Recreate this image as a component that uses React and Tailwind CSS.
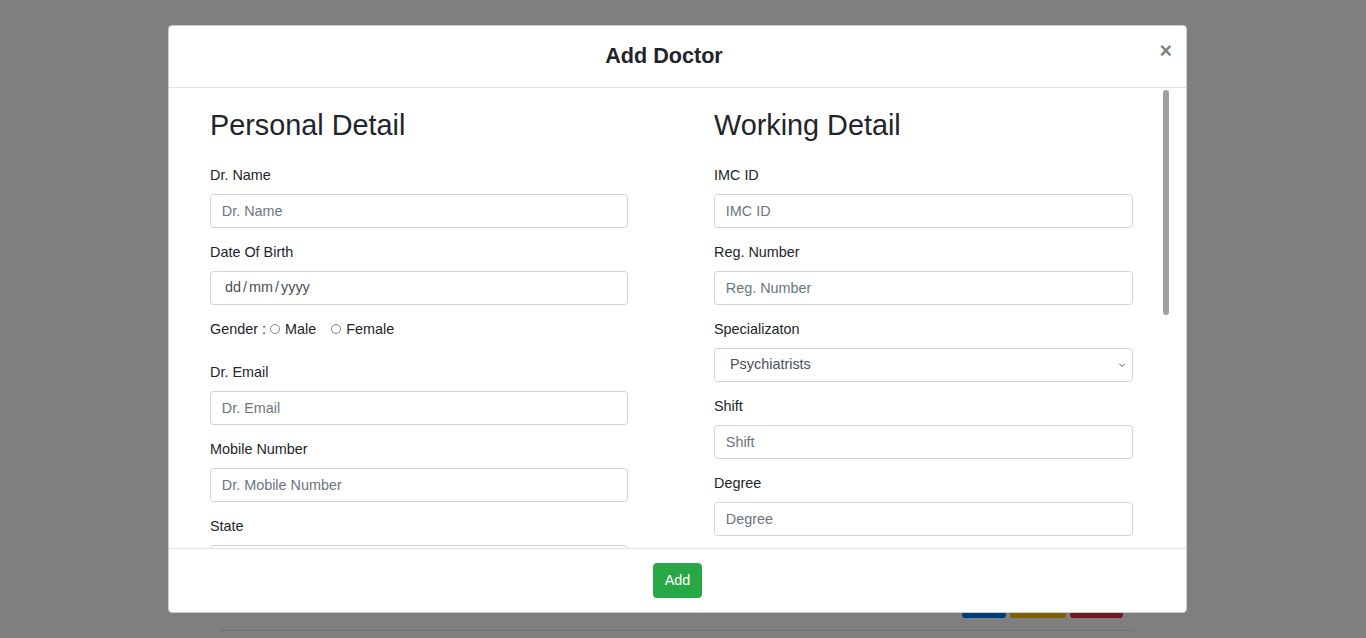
import { useState } from "react";

const Field = ({ label, placeholder }) => (
	<div className="mb-[14px]">
		<label className="block text-[14.4px] leading-[21.6px] mb-[7.2px] text-[#212529]">
			{label}
		</label>
		<input
			className="block w-full h-[34.2px] px-[10.8px] text-[14.4px] text-[#495057] border border-[#ced4da] rounded-[3.6px] bg-white placeholder:text-[#6c757d] outline-none"
			placeholder={placeholder}
		/>
	</div>
);

const Radio = ({ label, checked, onChange }) => (
	<label className="flex items-center gap-[5px] cursor-pointer" onClick={onChange}>
		<span
			className={`w-[10px] h-[10px] rounded-full border ${
				checked ? "border-[#0075ff] bg-[#0075ff]" : "border-[#858585]"
			}`}
		/>
		<span className="leading-[20px]">{label}</span>
	</label>
);

const App = () => {
	const [gender, setGender] = useState("");

	return (
		<div className="relative w-[1366px] h-[638px] overflow-hidden bg-white font-['Liberation_Sans',Arial,sans-serif] text-[#212529]">
			{/* page behind the modal */}
			<div className="pt-[588px] pl-[220px] w-[1133px]">
				<div className="flex justify-end gap-[4px] pr-[10px]">
					<button className="w-[44px] h-[30px] rounded-[3.6px] bg-[#007bff]" />
					<button className="w-[56px] h-[30px] rounded-[3.6px] bg-[#ffc107]" />
					<button className="w-[53px] h-[30px] rounded-[3.6px] bg-[#dc3545]" />
				</div>
				<div className="mt-[12px] border-t border-[#dee2e6]" />
			</div>

			{/* backdrop */}
			<div className="absolute inset-0 bg-black/50" />

			{/* modal */}
			<div className="absolute left-[168px] top-[25px] w-[1019px] bg-white border border-black/20 rounded-[4.3px] flex flex-col">
				<div className="relative h-[62px] pr-[27px] border-b border-[#dee2e6] flex items-center justify-center">
					<h4 className="text-[21.6px] leading-[32.4px] font-bold text-[#212529]">
						Add Doctor
					</h4>
					<button className="absolute right-[14px] top-[14px] text-[21.6px] leading-[21.6px] font-bold text-black/50">
						×
					</button>
				</div>

				<div className="relative h-[460px] overflow-hidden">
					<div className="flex pl-[41px] pt-[19.5px] gap-[86px]">
						{/* Personal Detail */}
						<div className="w-[418px]">
							<h2 className="text-[28.8px] leading-[34.6px] mb-[23.2px] text-[#212529]">
								Personal Detail
							</h2>
							<Field label="Dr. Name" placeholder="Dr. Name" />
							<div className="mb-[14px]">
								<label className="block text-[14.4px] leading-[21.6px] mb-[7.2px]">
									Date Of Birth
								</label>
								<div className="flex items-center h-[34.2px] pl-[14px] text-[14.4px] text-[#495057] border border-[#ced4da] rounded-[3.6px]">
									<span>dd</span>
									<span className="mx-[2px]">/</span>
									<span>mm</span>
									<span className="mx-[2px]">/</span>
									<span>yyyy</span>
								</div>
							</div>
							<div className="flex items-center text-[14.4px] h-[20px] mt-[13.5px] mb-[23px]">
								<span className="mr-[4px] translate-y-[1px]">Gender :</span>
								<div className="flex items-center gap-[15px]">
									<Radio
										label="Male"
										checked={gender === "m"}
										onChange={() => setGender("m")}
									/>
									<Radio
										label="Female"
										checked={gender === "f"}
										onChange={() => setGender("f")}
									/>
								</div>
							</div>
							<Field label="Dr. Email" placeholder="Dr. Email" />
							<Field label="Mobile Number" placeholder="Dr. Mobile Number" />
							<Field label="State" placeholder="" />
						</div>

						{/* Working Detail */}
						<div className="w-[419px]">
							<h2 className="text-[28.8px] leading-[34.6px] mb-[23.2px] text-[#212529]">
								Working Detail
							</h2>
							<Field label="IMC ID" placeholder="IMC ID" />
							<Field label="Reg. Number" placeholder="Reg. Number" />
							<div className="mb-[14px]">
								<label className="block text-[14.4px] leading-[21.6px] mb-[7.2px]">
									Specializaton
								</label>
								<div className="flex items-center justify-between h-[34.2px] pl-[15px] pr-[5px] text-[14.4px] text-[#495057] border border-[#ced4da] rounded-[3.6px]">
									<span>Psychiatrists</span>
									<svg width="10" height="10" viewBox="0 0 10 10" fill="none">
										<path
											d="M2.5 4 L5 6.5 L7.5 4"
											stroke="#555"
											strokeWidth="1"
										/>
									</svg>
								</div>
							</div>
							<Field label="Shift" placeholder="Shift" />
							<Field label="Degree" placeholder="Degree" />
						</div>
					</div>

					{/* scrollbar thumb */}
					<div className="absolute left-[994px] top-[2px] w-[6px] h-[225px] rounded-full bg-[#a0a0a0]" />
				</div>

				<div className="h-[64px] border-t border-[#dee2e6] flex items-center justify-center">
					<button className="h-[35px] px-[10.8px] text-[14.4px] text-white bg-[#28a745] border border-[#28a745] rounded-[3.6px]">
						Add
					</button>
				</div>
			</div>
		</div>
	);
};

export default App;
